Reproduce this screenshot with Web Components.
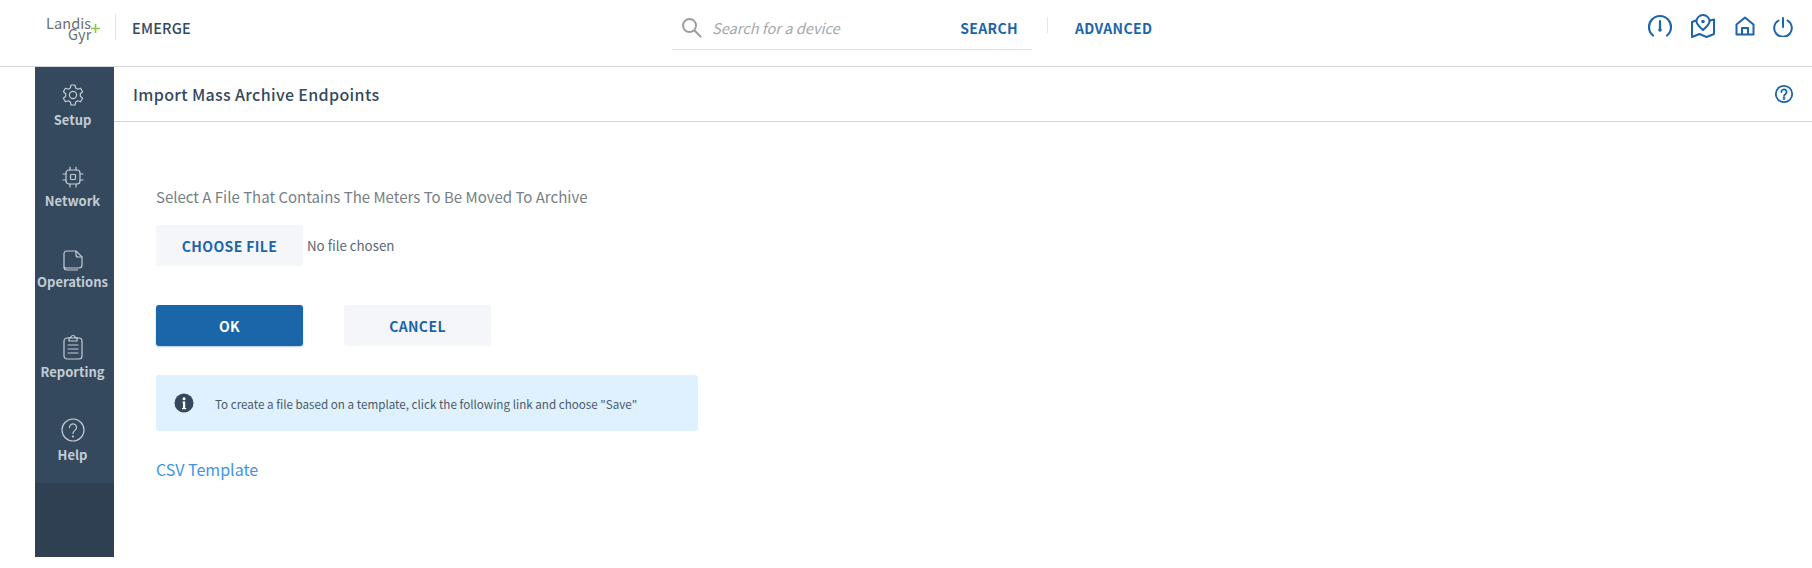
<!DOCTYPE html>
<html><head><meta charset="utf-8">
<style>
html,body{margin:0;padding:0;background:#fff}
body{font-family:"Noto Sans CJK SC","Noto Sans",sans-serif;width:1812px;height:568px;overflow:hidden;color:#34495e}
lg-body{display:flex;align-items:stretch}
</style></head><body>
<lg-header></lg-header>
<lg-body>
<lg-sidebar>
<lg-nav label="Setup" icon="gear" pad="16" gap="4"></lg-nav>
<lg-nav label="Network" icon="chip" pad="36" gap="3"></lg-nav>
<lg-nav label="Operations" icon="docs" pad="38" gap="1"></lg-nav>
<lg-nav label="Reporting" icon="clip" pad="43" gap="3"></lg-nav>
<lg-nav label="Help" icon="help" pad="37" gap="4"></lg-nav>
</lg-sidebar>
<lg-main>
<lg-titlebar>Import Mass Archive Endpoints</lg-titlebar>
<lg-form></lg-form>
</lg-main>
</lg-body>
<script>
const ICONS={
gear:'<svg width="24" height="24" viewBox="0 0 24 24" fill="none" stroke="#c3ccd4" stroke-width="1.2" stroke-linejoin="round"><circle cx="12" cy="12" r="3.6"/><path d="M10 2h4l.7 3.1 1.9 1.1 3-1 2 3.5-2.3 2.1v2.4l2.3 2.1-2 3.5-3-1-1.9 1.1L14 22h-4l-.7-3.1-1.9-1.1-3 1-2-3.5 2.3-2.1v-2.4L2.400 8.700l2-3.500 3 1 1.900-1.100z"/></svg>',
chip:'<svg width="24" height="24" viewBox="0 0 24 24" fill="none" stroke="#c3ccd4" stroke-width="1.2" stroke-linecap="round"><rect x="5" y="5" width="14" height="14" rx="3"/><rect x="9.500" y="9.500" width="5" height="5" rx=".8"/><path d="M9 2v3M15 2v3M9 19v3M15 19v3M2 9h3M2 15h3M19 9h3M19 15h3"/></svg>',
docs:'<svg width="24" height="24" viewBox="0 0 24 24" fill="none" stroke="#c3ccd4" stroke-width="1.2" stroke-linejoin="round"><path d="M5 3h10l6 6v8a3 3 0 0 1-3 3H5a3 3 0 0 1-2-1V6a3 3 0 0 1 2-3z"/><path d="M15 3v4a2 2 0 0 0 2 2h4"/><path d="M3 19a3 3 0 0 0 3 3h11"/></svg>',
clip:'<svg width="24" height="26" viewBox="0 0 24 26" fill="none" stroke="#c3ccd4" stroke-width="1.2" stroke-linecap="round" stroke-linejoin="round"><rect x="3" y="4" width="18" height="21" rx="3"/><path d="M8 3.500h2a2 2 0 0 1 4 0h2v3.500H8z"/><path d="M7 11h10M7 15h10M7 19h10"/></svg>',
help:'<svg width="24" height="24" viewBox="0 0 24 24" fill="none" stroke="#c3ccd4" stroke-width="1.2" stroke-linecap="round"><circle cx="12" cy="12" r="11"/><path d="M8.500 9.500a3.500 3.500 0 1 1 5.500 2.800c-1.300 1-2 1.500-2 3.200"/><circle cx="12" cy="18.500" r=".5"/></svg>'
};
function el(name,html){
  customElements.define(name,class extends HTMLElement{
    connectedCallback(){
      if(this.shadowRoot)return;
      const r=this.attachShadow({mode:'open'});
      r.innerHTML=typeof html==='function'?html(this):html;
    }
  });
}
const B='#1b65a9';
el('lg-logo',`<style>
:host{display:flex;flex-direction:column;width:52px;font-size:14.5px;line-height:11px;color:#6a6f73;flex:none;margin-top:2px;letter-spacing:.1px}
.g{display:flex;align-items:center;padding-left:22px}
svg{display:block;margin:-10px 0 0 0;flex:none}
</style><span>Landis</span><span class="g">Gyr<svg width="9" height="9" viewBox="0 0 9 9"><path d="M4.500 0v9M0 4.500h9" stroke="#8cc63f" stroke-width="1.600"/></svg></span>`);
el('lg-header',`<style>
:host{display:flex;align-items:flex-start;height:66px;border-bottom:1px solid #d2d5d9;box-sizing:content-box}
.left{display:flex;align-items:center;padding:12px 0 0 46px;width:672px;box-sizing:border-box}
.div{width:1px;height:26px;background:#e3e5e8;margin:0 16px 0 17px}
.em{font-size:14.5px;font-weight:500;color:#34495e;letter-spacing:.2px;line-height:26px;margin-top:3px}
.search{display:flex;align-items:center;width:360px;height:50px;border-bottom:1px solid #e0e2e5;box-sizing:border-box;padding:6px 14px 0 9px}
.search svg{margin-right:10px;flex:none}
.ph{font-style:italic;color:#a5a8ab;font-size:14.6px;flex:1;line-height:20px}
a{color:${B};font-weight:700;font-size:14px;letter-spacing:.36px;line-height:20px}
.d2{width:1px;height:16px;background:#e3e5e8;margin:0 27px 6px 15px}
.adv{display:flex;align-items:center;height:50px;padding-top:6px;box-sizing:border-box}
.right{margin-left:auto;display:flex;align-items:center;padding:14px 19px 0 0}
.right svg{display:block;flex:none}
</style>
<div class="left"><lg-logo></lg-logo><div class="div"></div><span class="em">EMERGE</span></div>
<div class="search"><svg width="21" height="21" viewBox="0 0 21 21" fill="none" stroke="#9a9da0" stroke-width="2" stroke-linecap="round"><circle cx="8.500" cy="8.500" r="6.500"/><path d="M13.500 13.500l6 6"/></svg><span class="ph">Search for a device</span><a>SEARCH</a></div>
<div class="adv"><div class="d2"></div><a>ADVANCED</a></div>
<div class="right">
<svg width="24" height="24" viewBox="0 0 24 24" fill="none" stroke="${B}" stroke-width="2.200" stroke-linecap="round"><path d="M5 21.500A11 11 0 1 1 19 21.500"/><path d="M12 7v8"/><circle cx="12" cy="16" r="1.800" fill="${B}" stroke="none"/></svg>
<svg style="margin-left:19px" width="24" height="24" viewBox="0 0 24 24" fill="none" stroke="${B}" stroke-width="2" stroke-linejoin="round" stroke-linecap="round"><path d="M5 6.500L1 8V23L8.500 20L15.500 23L23 20V5.500L19 6.500"/><path d="M12 16C8 12 5.500 10.500 5.500 7.500a6.500 6.500 0 0 1 13 0c0 3-2.500 4.500-6.500 8.500z"/><circle cx="12" cy="7.500" r=".8" fill="${B}"/></svg>
<svg style="margin-left:20px" width="20" height="20" viewBox="0 0 20 20" fill="none" stroke="${B}" stroke-width="2" stroke-linejoin="round"><path d="M1.500 18.500V8.500L10 1.500l8.500 7v10z"/><path d="M7 18.500v-6.500h6v6.500"/></svg>
<svg style="margin:1px 0 0 18px" width="20" height="20" viewBox="0 0 20 20" fill="none" stroke="${B}" stroke-width="2" stroke-linecap="round"><path d="M5.500 3.500a8.800 8.800 0 1 0 9 0"/><path d="M10 1v9"/></svg>
</div>`);
el('lg-sidebar',`<style>
:host{display:flex;flex-direction:column;width:79px;height:490px;margin-left:35px;background:#2f4052;flex:none}
.top{height:416px;background:#34495e}
</style><div class="top"><slot></slot></div>`);
el('lg-nav',h=>`<style>
:host{display:flex;flex-direction:column;align-items:center;padding:${h.getAttribute('pad')}px 4px 0 0;color:#c3ccd4;font-size:13px;font-weight:700;line-height:18px}
svg{display:block}
.t{margin-top:${h.getAttribute('gap')}px}
</style>${ICONS[h.getAttribute('icon')]}<span class="t">${h.getAttribute('label')}</span>`);
el('lg-main',`<style>:host{display:block;flex:1;min-width:0}</style><slot></slot>`);
el('lg-titlebar',`<style>
:host{display:flex;align-items:center;justify-content:space-between;height:54px;padding:0 18px 0 19px;border-bottom:1px solid #d2d5d9;font-size:16px;font-weight:500;color:#34495e;letter-spacing:.35px}
svg{display:block}
</style><span><slot></slot></span>
<svg width="20" height="20" viewBox="0 0 20 20" fill="none" stroke="${B}" stroke-width="1.800" stroke-linecap="round"><circle cx="10" cy="10" r="8.200"/><path d="M7.400 8a2.600 2.600 0 1 1 4.100 2.100c-1 .7-1.500 1-1.500 2"/><circle cx="10" cy="14.500" r=".5"/></svg>`);
el('lg-btn',h=>{const p=h.hasAttribute('primary');return `<style>
:host{display:flex;align-items:center;justify-content:center;width:147px;height:41px;border-radius:3px;font-size:14px;font-weight:700;letter-spacing:.36px;background:${p?B:'#f5f6fa'};color:${p?'#fff':B};flex:none;${p?'box-shadow:0 1px 2px rgba(27,101,169,.35);':''}}
</style><slot></slot>`});
el('lg-info',`<style>
:host{display:flex;align-items:center;width:542px;height:56px;background:#dff1fe;border-radius:3px;font-size:11.65px;color:#4a5a6a;box-sizing:border-box;padding-left:18px}
svg{margin-right:21px;flex:none}
</style><svg width="20" height="20" viewBox="0 0 20 20"><circle cx="10" cy="10" r="9.500" fill="#34495e"/><circle cx="10" cy="5.700" r="1.500" fill="#fff"/><path d="M8.500 8.500h2.700v6.500h1v1.200H8v-1.200h1V9.700h-.5z" fill="#fff"/></svg><slot></slot>`);
el('lg-form',`<style>
:host{display:block;padding:65px 0 0 42px}
.q{font-size:15px;line-height:20px;color:#777f86}
.r{display:flex;align-items:center}
.nf{font-size:13.3px;color:#5a6773;margin-left:4px}
.r1{margin-top:18px}.r2{margin-top:39px;gap:41px}
lg-info{margin:29px 0 0 0}
.csv{display:block;margin:27px 0 0 0;color:#3c94e6;font-size:16px;line-height:22px}
</style>
<div class="q">Select A File That Contains The Meters To Be Moved To Archive</div>
<div class="r r1"><lg-btn>CHOOSE FILE</lg-btn><span class="nf">No file chosen</span></div>
<div class="r r2"><lg-btn primary>OK</lg-btn><lg-btn>CANCEL</lg-btn></div>
<lg-info>To create a file based on a template, click the following link and choose "Save"</lg-info>
<a class="csv">CSV Template</a>`);
</script>
</body></html>
